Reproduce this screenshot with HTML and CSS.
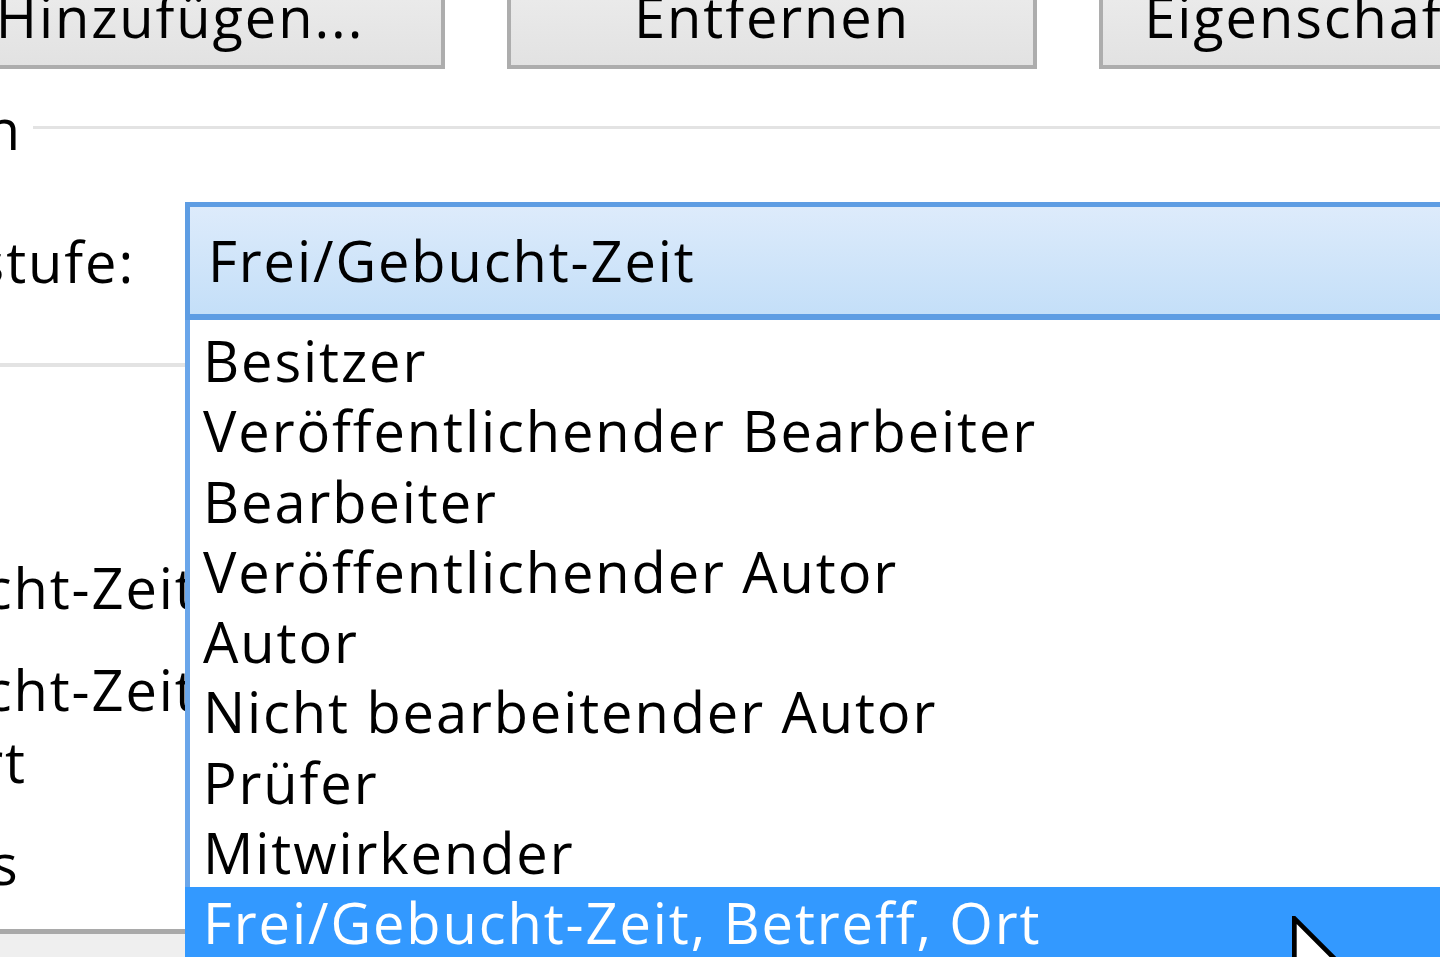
FILE: index.html
```html
<!DOCTYPE html>
<html lang="de">
<head>
<meta charset="utf-8">
<title>Berechtigungen</title>
<link rel="stylesheet" href="styles.css">
</head>
<body>
<div class="btn-row">
  <button class="btn">Hinzufügen...</button>
  <button class="btn">Entfernen</button>
  <button class="btn">Eigenschaften...</button>
</div>
<div class="group-head">
  <span class="clip group-label"><span>Berechtigungen</span></span>
  <span class="rule"></span>
</div>
<div class="level-row">
  <label class="clip level-label"><span>Berechtigungsstufe:</span></label>
  <div class="combo-wrap">
    <div class="combo">Frei/Gebucht-Zeit</div>
    <ul class="dropdown">
      <li>Besitzer</li>
      <li>Veröffentlichender Bearbeiter</li>
      <li>Bearbeiter</li>
      <li>Veröffentlichender Autor</li>
      <li>Autor</li>
      <li>Nicht bearbeitender Autor</li>
      <li>Prüfer</li>
      <li>Mitwirkender</li>
      <li class="sel">Frei/Gebucht-Zeit, Betreff, Ort</li>
    </ul>
  </div>
</div>
<div class="lower">
  <div class="left-rule"></div>
  <div class="read-group">
    <div class="opt">Keine</div>
    <div class="opt">Frei/Gebucht-Zeit</div>
    <div class="opt">Frei/Gebucht-Zeit,<br>Betreff, Ort</div>
    <div class="opt">Alle Details</div>
  </div>
</div>
<div class="footer"></div>
<svg class="cursor" viewBox="-0.5 -0.5 13 20" width="61" height="94">
  <path d="M0 0 L0 16 L4 12 L7 18 L9 17 L6 11 L11 11 Z" fill="#fff" stroke="#000" stroke-width="1" stroke-linejoin="miter"/>
</svg>
</body>
</html>
```
FILE: styles.css
```css
* { box-sizing: border-box; margin: 0; padding: 0; }
html, body { width: 1440px; height: 957px; overflow: hidden; background: #fff; }
body {
  font-family: "Open Sans", "Noto Sans", sans-serif;
  font-size: 56px;
  font-weight: 500;
  color: #000;
  position: relative;
  letter-spacing: 1.9px;
}
.btn-row { display: flex; gap: 62px; margin-left: -85px; margin-top: -37px; }
.btn {
  flex: 0 0 530px;
  height: 106px;
  border: 4px solid #adadad;
  background: linear-gradient(#eeeeee, #e2e2e2);
  font: inherit;
  letter-spacing: inherit;
  color: #000;
  line-height: 94px;
  text-align: center;
  white-space: nowrap;
  overflow: hidden;
}
.group-head { display: flex; margin-top: 29px; height: 60px; line-height: 60px; }
.clip { display: flex; justify-content: flex-end; overflow: hidden; white-space: nowrap; flex: none; }
.clip > span { flex: none; }
.group-label { width: 22px; }
.rule { flex: 1; height: 3px; background: #e3e3e3; margin: 28px 0 0 11px; }
.level-row { display: flex; margin-top: 44px; height: 118px; }
.level-label { width: 135px; line-height: 118px; }
.combo-wrap { position: relative; margin-left: 50px; width: 1400px; flex: none; }
.combo {
  height: 118px;
  border: 5px solid #5e9de3;
  border-bottom-width: 6px;
  border-right: none;
  background: linear-gradient(#ddebfb, #c4dff8);
  line-height: 107px;
  padding-left: 18px;
  white-space: nowrap;
}
.dropdown {
  position: absolute;
  top: 100%;
  left: 0;
  right: 0;
  list-style: none;
  background: #fff;
  border-left: 5px solid #6aa6ea;
  padding-top: 5px;
  z-index: 2;
}
.dropdown li { height: 70.3px; line-height: 70.3px; padding-left: 13px; white-space: nowrap; }
.dropdown li.sel { background: #3399ff; color: #fff; margin-left: -5px; padding-left: 18px; }
.left-rule { height: 4px; background: #e3e3e3; margin-top: 43px; width: 185px; }
.read-group { margin-top: 82px; margin-left: -291px; display: flex; flex-direction: column; gap: 30px; }
.opt { line-height: 72px; white-space: nowrap; }
.footer { margin-top: 30px; height: 40px; border-top: 5px solid #a9a9a9; background: #efefef; }
.cursor { position: absolute; left: 1292px; top: 916px; z-index: 3; }
```
